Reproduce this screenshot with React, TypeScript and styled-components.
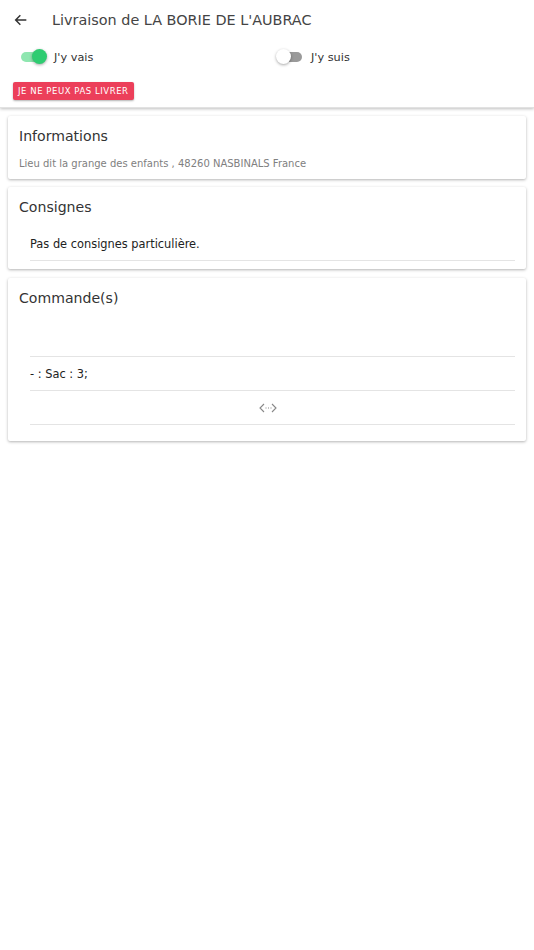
import React from 'react';
import styled, { createGlobalStyle } from 'styled-components';

const GlobalStyle = createGlobalStyle`
  *, *::before, *::after {
    box-sizing: border-box;
  }

  body {
    margin: 0;
    background: #ffffff;
    font-family: 'DejaVu Sans', Verdana, sans-serif;
    color: #222222;
  }
`;

const Header = styled.header`
  background: #ffffff;
  box-shadow: 0 1px 3px rgba(0, 0, 0, 0.25);
  padding-bottom: 7px;
  border-bottom: 1px solid #e2e2e2;
`;

const TopBar = styled.div`
  display: flex;
  align-items: center;
  height: 40px;
  padding-left: 12px;
`;

const BackButton = styled.button`
  display: flex;
  align-items: center;
  justify-content: center;
  width: 18px;
  height: 18px;
  padding: 0;
  border: 0;
  background: none;
  color: #333333;
`;

const Title = styled.h1`
  margin: 0 0 0 22px;
  font-size: 14.4px;
  font-weight: 400;
  color: #444444;
`;

const ToggleRow = styled.div`
  display: grid;
  grid-template-columns: 1fr 1fr;
  align-items: center;
  height: 34px;
  padding-left: 20px;
`;

const ToggleLabel = styled.label`
  display: flex;
  align-items: center;
  gap: 9px;
  font-size: 11.3px;
  color: #333333;
`;

const Track = styled.span<{ $on: boolean }>`
  position: relative;
  width: 24px;
  height: 10px;
  border-radius: 5px;
  background: ${(p) => (p.$on ? '#8fe6b0' : '#9a9a9a')};
  margin-left: 1px;
`;

const Thumb = styled.span<{ $on: boolean }>`
  position: absolute;
  top: -3px;
  left: ${(p) => (p.$on ? '11px' : '-2px')};
  width: 15px;
  height: 15px;
  border-radius: 50%;
  background: ${(p) => (p.$on ? '#2ecc71' : '#ffffff')};
  box-shadow: 0 1px 3px rgba(0, 0, 0, 0.35);
`;

const DangerButton = styled.button`
  display: block;
  margin: 8px 0 0 13px;
  height: 18px;
  padding: 0 5px;
  border: 0;
  border-radius: 2px;
  background: #ec3f5a;
  color: #ffffff;
  font-family: 'DejaVu Sans', sans-serif;
  font-size: 8.5px;
  letter-spacing: 0.55px;
  box-shadow: 0 1px 2px rgba(0, 0, 0, 0.3);
`;

const Content = styled.main`
  display: flex;
  flex-direction: column;
  gap: 8px;
  padding: 8px 8px;
`;

const Card = styled.section<{ $bottom?: number; $top?: number }>`
  margin-top: ${(p) => p.$top ?? 0}px;
  background: #ffffff;
  border-radius: 2px;
  box-shadow: 0 1px 3px rgba(0, 0, 0, 0.3);
  padding: 10px 11px ${(p) => p.$bottom ?? 10}px;
`;

const CardTitle = styled.h2`
  margin: 0;
  font-size: 14.1px;
  font-weight: 400;
  color: #333333;
  line-height: 21px;
`;

const Address = styled.p`
  margin: 10px 0 0;
  font-size: 10px;
  line-height: 14px;
  color: #808080;
`;

const List = styled.ul`
  list-style: none;
  margin: 9px 0 0;
  padding: 0 0 0 11px;
`;

const Item = styled.li<{ $h: number; $center?: boolean }>`
  display: flex;
  align-items: center;
  justify-content: ${(p) => (p.$center ? 'center' : 'flex-start')};
  height: ${(p) => p.$h}px;
  padding-right: ${(p) => (p.$center ? 10 : 0)}px;
  border-bottom: 1px solid #e4e4e4;
  font-size: 11.4px;
  color: #222222;
`;

const ArrowIcon = () => (
  <svg width="16" height="16" viewBox="0 0 24 24" fill="none" stroke="#333" strokeWidth="2.2">
    <path d="M20 12H4M11 5l-7 7 7 7" />
  </svg>
);

const CodeIcon = () => (
  <svg width="18" height="10" viewBox="0 0 18 10" fill="none" stroke="#888" strokeWidth="1.1">
    <path d="M5 1L1 5l4 4M13 1l4 4-4 4" />
    <path d="M6.5 5h1M9 5h1M11.5 5h1" />
  </svg>
);

const Toggle = ({ on, label }: { on: boolean; label: string }) => (
  <ToggleLabel>
    <Track $on={on}>
      <Thumb $on={on} />
    </Track>
    {label}
  </ToggleLabel>
);

export default function App() {
  return (
    <>
      <GlobalStyle />
      <Header>
        <TopBar>
          <BackButton>
            <ArrowIcon />
          </BackButton>
          <Title>Livraison de LA BORIE DE L'AUBRAC</Title>
        </TopBar>
        <ToggleRow>
          <Toggle on label="J'y vais" />
          <Toggle on={false} label="J'y suis" />
        </ToggleRow>
        <DangerButton>JE NE PEUX PAS LIVRER</DangerButton>
      </Header>
      <Content>
        <Card $bottom={8}>
          <CardTitle>Informations</CardTitle>
          <Address>Lieu dit la grange des enfants , 48260 NASBINALS France</Address>
        </Card>
        <Card $bottom={8}>
          <CardTitle>Consignes</CardTitle>
          <List>
            <Item $h={34}>Pas de consignes particulière.</Item>
          </List>
        </Card>
        <Card $bottom={16} $top={1}>
          <CardTitle>Commande(s)</CardTitle>
          <List>
            <Item $h={39} />
            <Item $h={34}>- : Sac : 3;</Item>
            <Item $h={34} $center>
              <CodeIcon />
            </Item>
          </List>
        </Card>
      </Content>
    </>
  );
}
